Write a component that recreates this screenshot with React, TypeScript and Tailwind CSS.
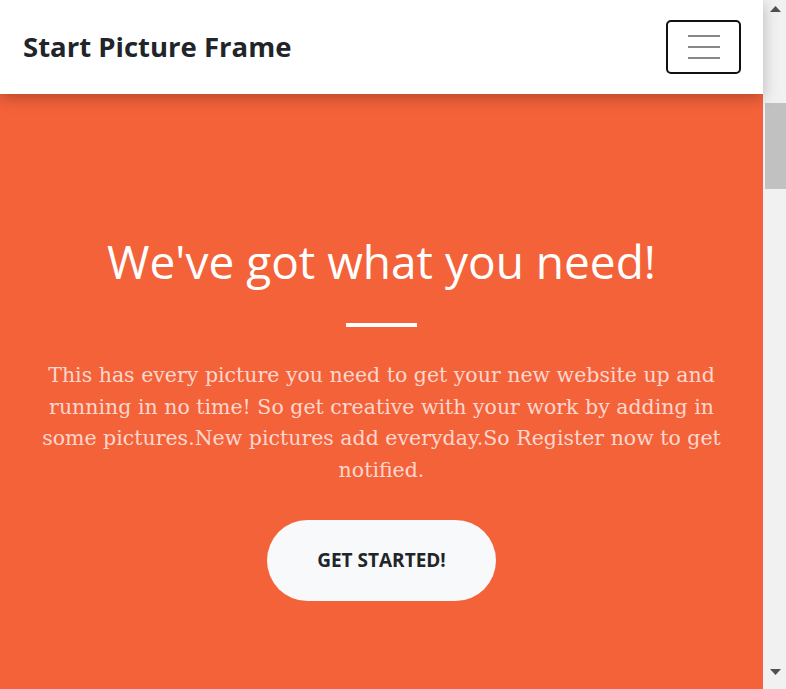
import React from "react";

/* ------------------------------------------------------------------ */
/*  Scrollbar column (part of the captured window)                     */
/* ------------------------------------------------------------------ */

function FakeScrollbar() {
  return (
    <div className="flex h-full w-[23px] shrink-0 flex-col bg-[#f1f1f1]">
      <div className="flex h-[17px] items-center justify-center pl-[2px]">
        <svg width="11" height="6" viewBox="0 0 11 6">
          <path d="M0 6 L5.5 0 L11 6 Z" fill="#505050" />
        </svg>
      </div>
      <div className="h-[86px]" />
      <div className="ml-[2px] h-[86px] bg-[#c1c1c1]" />
      <div className="flex-1" />
      <div className="flex h-[20px] items-start justify-center pl-[2px]">
        <svg width="11" height="6" viewBox="0 0 11 6">
          <path d="M0 0 L11 0 L5.5 6 Z" fill="#505050" />
        </svg>
      </div>
    </div>
  );
}

/* ------------------------------------------------------------------ */
/*  Page                                                               */
/* ------------------------------------------------------------------ */

export default function App() {
  return (
    <div className="flex h-[689px] w-full overflow-hidden bg-white">
      <div className="relative flex h-full flex-1 flex-col">
        {/* Navbar */}
        <nav className="relative z-10 flex h-[94px] shrink-0 items-center justify-between bg-white pl-[23px] pr-[22px] shadow-[0_4px_14px_rgba(0,0,0,0.25)]">
          <span className="font-['Open_Sans',sans-serif] text-[27.5px] font-bold text-[#212529]">
            Start Picture Frame
          </span>
          <button className="flex h-[54px] w-[75px] flex-col items-center justify-center gap-[9px] rounded-[5px] border-2 border-[#111]">
            <span className="block h-[2px] w-[32px] bg-[#888]" />
            <span className="block h-[2px] w-[32px] bg-[#888]" />
            <span className="block h-[2px] w-[32px] bg-[#888]" />
          </button>
        </nav>

        {/* Masthead */}
        <header className="flex flex-1 flex-col items-center bg-[#f4623a] px-[30px] pt-[138px] text-center">
          <h1 className="font-['Open_Sans',sans-serif] text-[46px] font-normal leading-[58px] text-white">
            We&apos;ve got what you need!
          </h1>
          <hr className="mt-[33px] h-[4px] w-[71px] border-0 bg-white" />
          <p className="mt-[33px] max-w-[700px] font-['DejaVu_Serif',serif] text-[20.5px] leading-[31.5px] text-white/75">
            This has every picture you need to get your new website up and
            running in no time! So get creative with your work by adding in
            some pictures.New pictures add everyday.So Register now to get
            notified.
          </p>
          <button className="mt-[34px] flex h-[81px] w-[229px] items-center justify-center rounded-full bg-[#f8f9fa] font-['Open_Sans',sans-serif] text-[19px] font-bold uppercase text-[#212529]">
            Get Started!
          </button>
        </header>
      </div>
      <FakeScrollbar />
    </div>
  );
}
